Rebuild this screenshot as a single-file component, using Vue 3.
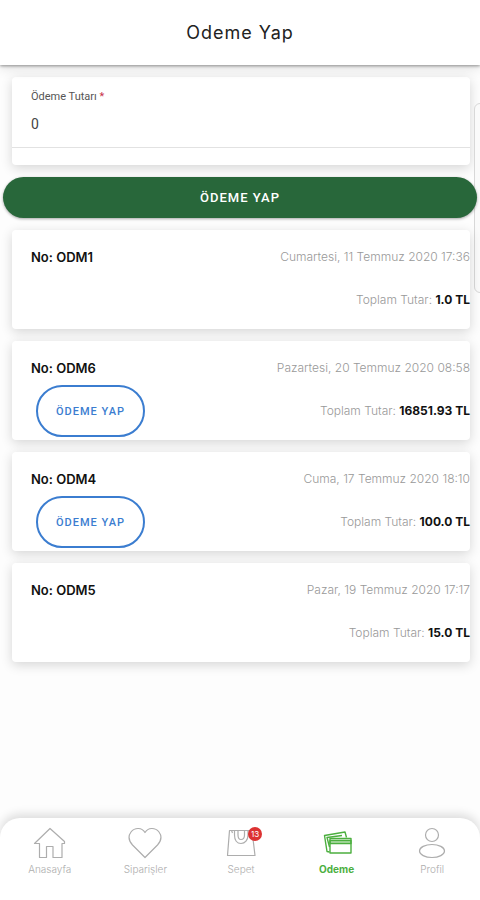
<script setup>
import { ref } from 'vue'

const amount = ref('0')

const payments = [
  { no: 'ODM1', date: 'Cumartesi, 11 Temmuz 2020 17:36', total: '1.0', payable: false },
  { no: 'ODM6', date: 'Pazartesi, 20 Temmuz 2020 08:58', total: '16851.93', payable: true },
  { no: 'ODM4', date: 'Cuma, 17 Temmuz 2020 18:10', total: '100.0', payable: true },
  { no: 'ODM5', date: 'Pazar, 19 Temmuz 2020 17:17', total: '15.0', payable: false }
]

const tabs = [
  { id: 'home', label: 'Anasayfa' },
  { id: 'orders', label: 'Siparişler' },
  { id: 'cart', label: 'Sepet', badge: 13 },
  { id: 'pay', label: 'Odeme' },
  { id: 'profile', label: 'Profil' }
]
const active = ref('pay')
</script>

<template>
  <div class="screen">
    <header class="bar">
      <h1>Odeme Yap</h1>
    </header>

    <main class="content">
      <div class="side-panel" aria-hidden="true"></div>
      <form class="form" @submit.prevent>
        <div class="card field-card">
          <div class="field">
            <label for="amount">Ödeme Tutarı <span class="required">*</span></label>
            <input id="amount" v-model="amount" type="text" inputmode="decimal" />
          </div>
        </div>
        <button class="submit" type="submit">ÖDEME YAP</button>
      </form>

      <article v-for="p in payments" :key="p.no" class="card payment">
        <div class="row">
          <h2>No: {{ p.no }}</h2>
          <span class="muted">{{ p.date }}</span>
        </div>
        <div class="row lower">
          <button v-if="p.payable" class="outline" type="button">ÖDEME YAP</button>
          <span class="muted total">Toplam Tutar: <strong>{{ p.total }} TL</strong></span>
        </div>
      </article>
    </main>

    <nav class="tabs">
      <a
        v-for="t in tabs"
        :key="t.id"
        :href="'#' + t.id"
        class="tab"
        :class="{ active: active === t.id }"
        @click="active = t.id"
      >
        <span class="icon">
          <svg v-if="t.id === 'home'" viewBox="0 0 34 32">
            <path d="M17 1.500 1.500 16.500H6.500V30.500H13.500V19.500H20V30.500H29V16.500H31.500V14.500Z" />
          </svg>
          <svg v-else-if="t.id === 'orders'" viewBox="0 0 34 32">
            <path d="M17 30.500 4.500 18C1 14 0 9 3 5C7 0 14 0.500 17 5.500C20 0.500 27 0 31 5C34 9 33 14 29.500 18Z" />
          </svg>
          <svg v-else-if="t.id === 'cart'" viewBox="0 0 34 32">
            <path d="M5.500 3.500H28L31 28.500H3.500Z" />
            <path d="M7.500 3.500 8.500 6" />
            <path d="M10.500 3.500V8C10.500 13 13 16.500 17 16.500S24 13 24 8V3.500H20.500V8C20.500 11 19 12.500 17 12.500S14 11 14 8V3.500" />
          </svg>
          <svg v-else-if="t.id === 'pay'" class="bold" viewBox="0 0 34 32">
            <path d="M9.500 25 7 24.500 4.500 8.500 25 5 26.500 10.500" />
            <path d="M9.500 20 7 10.500 22 8.500" />
            <path d="M10 11.500H31V26H10Z" />
            <path d="M10 13.500H31V16.500H10Z" class="stripe" />
          </svg>
          <svg v-else viewBox="0 0 34 32">
            <ellipse cx="17" cy="8" rx="6.500" ry="6.500" />
            <ellipse cx="17" cy="24" rx="12.500" ry="6.500" />
          </svg>
          <span v-if="t.badge" class="badge">{{ t.badge }}</span>
        </span>
        <span class="label">{{ t.label }}</span>
      </a>
    </nav>
  </div>
</template>

<style>
body {
  margin: 0;
  background: #fdfdfd;
}
</style>

<style scoped>
.screen {
  display: flex;
  flex-direction: column;
  min-height: 100vh;
  overflow: hidden;
  font-family: Inter, "Open Sans", sans-serif;
  color: #111;
}

.bar {
  position: relative;
  z-index: 1;
  display: flex;
  align-items: center;
  justify-content: center;
  height: 65px;
  background: #fff;
  box-shadow: 0 1px 3px rgba(0, 0, 0, 0.4), 0 3px 12px rgba(0, 0, 0, 0.12);
}

h1 {
  margin: 0;
  font-size: 18px;
  font-weight: 400;
  letter-spacing: 1px;
  line-height: 24px;
  color: #222;
}

.content {
  position: relative;
  flex: 1;
  display: flex;
  flex-direction: column;
  gap: 12px;
  padding: 12px 0;
}

.form {
  display: flex;
  flex-direction: column;
  gap: 12px;
}

.card {
  margin: 0 10px 0 12px;
  background: #fff;
  border-radius: 4px;
  box-shadow: 0 3px 12px rgba(0, 0, 0, 0.16);
}

.field-card {
  padding-bottom: 17px;
}

.field {
  display: flex;
  flex-direction: column;
  gap: 8px;
  padding: 12px 19px;
  border-bottom: 1px solid #e2e2e2;
}

.field label {
  font-family: Roboto, sans-serif;
  font-size: 11px;
  line-height: 16px;
  color: #555;
}

.required {
  color: #c8324b;
}

.field input {
  width: 100%;
  height: 22px;
  padding: 0;
  border: 0;
  outline: 0;
  background: transparent;
  font-family: Roboto, sans-serif;
  font-size: 14px;
  color: #444;
}

.submit {
  position: relative;
  height: 41px;
  margin: 0 3px;
  border: 0;
  border-radius: 21px;
  background: #28673a;
  color: #fff;
  font-family: Roboto, sans-serif;
  font-size: 13px;
  font-weight: 500;
  letter-spacing: 1px;
  box-shadow: 0 1px 3px rgba(0, 0, 0, 0.35);
}

.side-panel {
  position: absolute;
  top: 38px;
  right: -8px;
  width: 12px;
  height: 188px;
  border: 1px solid #d8d8d8;
  border-radius: 6px;
  background: #fafafa;
}

.payment {
  position: relative;
  height: 99px;
}

.row {
  display: flex;
  align-items: center;
  justify-content: space-between;
  padding-left: 19px;
}

.payment > .row:first-child {
  padding-top: 16px;
  height: 22px;
}

.lower {
  height: 64px;
  padding-left: 24px;
}

h2 {
  margin: 0;
  font-size: 13px;
  font-weight: 600;
  line-height: 20px;
}

.muted {
  font-size: 12px;
  font-weight: 300;
  line-height: 20px;
  color: #999;
  white-space: nowrap;
}

.muted strong {
  font-weight: 700;
  color: #111;
}

.total {
  margin-left: auto;
}

.outline {
  height: 52px;
  padding: 0 18px;
  border: 2px solid #3b7dd0;
  border-radius: 26px;
  background: transparent;
  color: #3b7dd0;
  font-family: Roboto, sans-serif;
  font-size: 11px;
  font-weight: 500;
  letter-spacing: 1px;
  white-space: nowrap;
}

.tabs {
  display: flex;
  height: 82px;
  padding-left: 2px;
  border-radius: 20px 20px 0 0;
  background: #fff;
  box-shadow: 0 -4px 10px rgba(0, 0, 0, 0.13);
}

.tab {
  flex: 1;
  display: flex;
  flex-direction: column;
  align-items: center;
  padding-top: 9px;
  color: #adadad;
  text-decoration: none;
}

.icon {
  position: relative;
  width: 34px;
  height: 32px;
}

.icon svg {
  display: block;
  width: 34px;
  height: 32px;
  fill: none;
  stroke: currentColor;
  stroke-width: 1.2;
  stroke-linejoin: round;
}

.icon svg.bold {
  stroke-width: 1.4;
}

.stripe {
  fill: currentColor;
  fill-opacity: 0.4;
}

.badge {
  position: absolute;
  top: 0;
  right: -4px;
  width: 14px;
  height: 14px;
  border-radius: 7px;
  background: #dc3232;
  color: #fff;
  font-size: 8px;
  line-height: 14px;
  text-align: center;
}

.label {
  font-size: 10px;
  font-weight: 300;
  line-height: 20px;
}

.active {
  color: #4caf3f;
}

.active .label {
  font-weight: 700;
}
</style>
